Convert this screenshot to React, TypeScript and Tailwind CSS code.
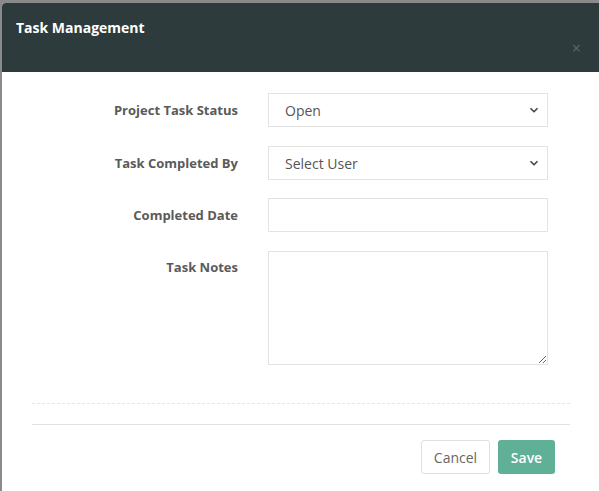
import React, { useState } from 'react';

const ChevronDown: React.FC = () => (
  <svg width="10" height="10" viewBox="0 0 10 10" className="pointer-events-none absolute right-[9px] top-1/2 -translate-y-1/2">
    <path d="M1.5 3.2 L5 6.7 L8.5 3.2" fill="none" stroke="#444" strokeWidth="1.6" />
  </svg>
);

const App: React.FC = () => {
  const [status, setStatus] = useState('Open');
  const [user, setUser] = useState('');
  const [date, setDate] = useState('');
  const [notes, setNotes] = useState('');

  const labelCls = 'w-[206px] shrink-0 text-right text-[13px] font-bold text-[#5a5a5a] leading-[20px]';
  const fieldCls = 'w-[280px] border border-[#e3e3e3] bg-white text-[14px] text-[#555] outline-none';

  return (
    <div
      className="min-h-screen bg-[#8a8a8a] pt-[3px] pl-[2px] overflow-hidden"
      style={{ fontFamily: '"Open Sans", "Noto Sans", Arial, sans-serif' }}
    >
      <div className="w-[597px] bg-white rounded-tl-[4px] overflow-hidden">
        {/* Header */}
        <div className="h-[69px] bg-[#2e3b3c] flex justify-between pl-[14px] pr-[18px] pt-[15px] pb-[19px]">
          <h4 className="text-[14px] font-bold text-white leading-[20px] self-start">Task Management</h4>
          <span className="self-end text-[#5b6767] text-[16px] leading-[10px]">×</span>
        </div>

        {/* Body */}
        <div className="pl-[30px] w-[568px] pt-[21px]">
          <div className="flex items-center gap-[30px] mb-[19px]">
            <label className={labelCls}>Project Task Status</label>
            <div className="relative">
              <select
                value={status}
                onChange={(e) => setStatus(e.target.value)}
                className={`${fieldCls} h-[34px] appearance-none pl-[16px] pr-[24px]`}
              >
                <option>Open</option>
                <option>In Progress</option>
                <option>Completed</option>
              </select>
              <ChevronDown />
            </div>
          </div>

          <div className="flex items-center gap-[30px] mb-[18px]">
            <label className={labelCls}>Task Completed By</label>
            <div className="relative">
              <select
                value={user}
                onChange={(e) => setUser(e.target.value)}
                className={`${fieldCls} h-[34px] appearance-none pl-[16px] pr-[24px]`}
              >
                <option value="">Select User</option>
              </select>
              <ChevronDown />
            </div>
          </div>

          <div className="flex items-center gap-[30px] mb-[19px]">
            <label className={labelCls}>Completed Date</label>
            <input
              type="text"
              value={date}
              onChange={(e) => setDate(e.target.value)}
              className={`${fieldCls} h-[34px] px-[12px]`}
            />
          </div>

          <div className="flex items-start gap-[30px]">
            <label className={`${labelCls} pt-[6px]`}>Task Notes</label>
            <textarea
              value={notes}
              onChange={(e) => setNotes(e.target.value)}
              className={`${fieldCls} h-[114px] px-[12px] py-[6px] block`}
            />
          </div>

          <div className="mt-[38px] border-t border-dashed border-[#e6e6e6]" />
          <div className="mt-[20px] border-t border-[#e2e2e2]" />

          <div className="flex justify-end gap-[8px] pt-[15px] pr-[15px] pb-[20px]">
            <button className="h-[34px] w-[69px] rounded-[3px] border border-[#e0e0e0] bg-white text-[14px] text-[#666]">
              Cancel
            </button>
            <button className="h-[34px] w-[57px] rounded-[3px] bg-[#5fb096] text-[14px] font-semibold text-white">
              Save
            </button>
          </div>
        </div>
      </div>
    </div>
  );
};

export default App;
